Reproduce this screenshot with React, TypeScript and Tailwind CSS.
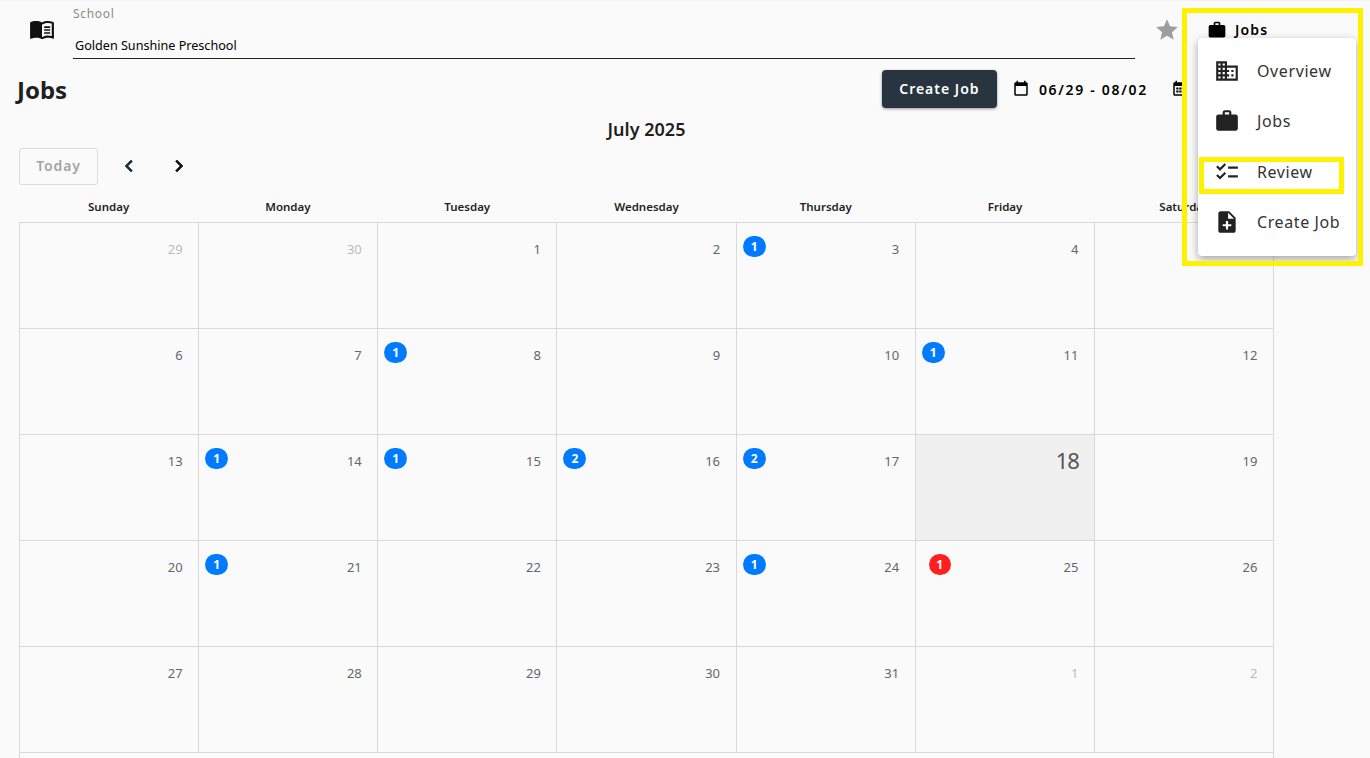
import type { ReactNode } from "react"

const sans = "font-['Noto_Sans',sans-serif]"

const icons = {
  book: "M21 5c-1.11-.35-2.33-.5-3.5-.5-1.95 0-4.05.4-5.5 1.5-1.45-1.1-3.55-1.5-5.5-1.5S2.45 4.9 1 6v14.65c0 .25.25.5.5.5.1 0 .15-.05.25-.05C3.1 20.45 5.05 20 6.5 20c1.95 0 4.05.4 5.5 1.5 1.35-.85 3.8-1.5 5.5-1.5 1.65 0 3.35.3 4.75 1.05.1.05.15.05.25.05.25 0 .5-.25.5-.5V6c-.6-.45-1.25-.75-2-1zm0 13.5c-1.1-.35-2.3-.5-3.5-.5-1.7 0-4.15.65-5.5 1.5V8c1.35-.85 3.8-1.5 5.5-1.5 1.2 0 2.4.15 3.5.5v11.5zM14 9.5h5.5V11H14zM14 12.2h5.5v1.5H14zM14 14.9h5.5v1.5H14z",
  star: "M12 17.27L18.18 21l-1.64-7.03L22 9.24l-7.19-.61L12 2 9.19 8.63 2 9.24l5.46 4.73L5.82 21z",
  work: "M20 6h-4V4c0-1.11-.89-2-2-2h-4c-1.11 0-2 .89-2 2v2H4c-1.11 0-1.99.89-1.99 2L2 19c0 1.11.89 2 2 2h16c1.11 0 2-.89 2-2V8c0-1.11-.89-2-2-2zm-6 0h-4V4h4v2z",
  domain: "M12 7V3H2v18h20V7H12zM6 19H4v-2h2v2zm0-4H4v-2h2v2zm0-4H4V9h2v2zm0-4H4V5h2v2zm4 12H8v-2h2v2zm0-4H8v-2h2v2zm0-4H8V9h2v2zm0-4H8V5h2v2zm10 12h-8v-2h2v-2h-2v-2h2v-2h-2V9h8v10zm-2-8h-2v2h2v-2zm0 4h-2v2h2v-2z",
  checklist: "M22 7h-9v2h9V7zm0 8h-9v2h9v-2zM5.54 11 2 7.46l1.41-1.41 2.12 2.12 4.24-4.24 1.41 1.41L5.54 11zm0 8L2 15.46l1.41-1.41 2.12 2.12 4.24-4.24 1.41 1.41L5.54 19z",
  noteAdd: "M14 2H6c-1.1 0-1.99.9-1.99 2L4 20c0 1.1.89 2 1.99 2H18c1.1 0 2-.9 2-2V8l-6-6zm2 14h-3v3h-2v-3H8v-2h3v-3h2v3h3v2zm-3-7V3.5L18.5 9H13z",
  event: "M19 3h-1V1h-2v2H8V1H6v2H5c-1.11 0-1.99.9-1.99 2L3 19c0 1.1.89 2 2 2h14c1.1 0 2-.9 2-2V5c0-1.1-.9-2-2-2zm0 16H5V8h14v11z",
  eventGrid: "M19 3h-1V1h-2v2H8V1H6v2H5c-1.11 0-1.99.9-1.99 2L3 19c0 1.1.89 2 2 2h14c1.1 0 2-.9 2-2V5c0-1.1-.9-2-2-2zm0 16H5V8h14v11zM7 10h3v2.5H7zM11 10h3v2.5h-3zM15 10h2v2.5h-2zM7 14h3v2.5H7zM11 14h3v2.5h-3z",
  left: "M15.41 7.41L14 6l-6 6 6 6 1.41-1.41L10.83 12z",
  right: "M10 6L8.59 7.41 13.17 12l-4.58 4.59L10 18l6-6z",
}

function Icon({ d, className }: { d: string; className: string }) {
  return (
    <svg viewBox="0 0 24 24" className={className} fill="currentColor" aria-hidden="true">
      <path d={d} />
    </svg>
  )
}

type Day = { n: number; muted?: boolean; today?: boolean; badge?: number; red?: boolean }

const weeks: Day[][] = [
  [{ n: 29, muted: true }, { n: 30, muted: true }, { n: 1 }, { n: 2 }, { n: 3, badge: 1 }, { n: 4 }, { n: 5 }],
  [{ n: 6 }, { n: 7 }, { n: 8, badge: 1 }, { n: 9 }, { n: 10 }, { n: 11, badge: 1 }, { n: 12 }],
  [{ n: 13 }, { n: 14, badge: 1 }, { n: 15, badge: 1 }, { n: 16, badge: 2 }, { n: 17, badge: 2 }, { n: 18, today: true }, { n: 19 }],
  [{ n: 20 }, { n: 21, badge: 1 }, { n: 22 }, { n: 23 }, { n: 24, badge: 1 }, { n: 25, badge: 1, red: true }, { n: 26 }],
  [{ n: 27 }, { n: 28 }, { n: 29 }, { n: 30 }, { n: 31 }, { n: 1, muted: true }, { n: 2, muted: true }],
]

const dayNames = ["Sunday", "Monday", "Tuesday", "Wednesday", "Thursday", "Friday", "Saturday"]

function DayCell({ day }: { day: Day }) {
  return (
    <div className={`relative h-[106px] border-r border-b border-[#d9d9d9] ${day.today ? "bg-[#f0f0f0]" : ""}`}>
      {day.badge && (
        <span
          className={`absolute top-[13px] flex h-[21px] items-center justify-center rounded-full text-[12px] font-bold text-white ${
            day.red ? "left-[13px] w-[22px] bg-[#ff1f1f]" : "left-[6px] w-[23px] bg-[#007bff]"
          }`}
        >
          {day.badge}
        </span>
      )}
      <div
        className={`text-right ${
          day.today
            ? "pt-[9px] pr-[15px] text-[22px] leading-[32px] tracking-[-1px] text-[#555]"
            : "pt-[16px] pr-[15.5px] text-[13px] leading-[20px]"
        } ${day.muted ? "text-[#bbb]" : day.today ? "" : "text-[#666]"}`}
      >
        {day.n}
      </div>
    </div>
  )
}

function MenuItem({ d, label, size = "h-[26px] w-[26px]" }: { d: string; label: ReactNode; size?: string }) {
  return (
    <div className="flex h-[50.5px] items-center pl-[16px] text-[16px] tracking-[0.6px] text-[#333]">
      <div className="flex w-[43px] items-center">
        <Icon d={d} className={`${size} text-[#222]`} />
      </div>
      {label}
    </div>
  )
}

export default function App() {
  return (
    <div className={`relative h-[758px] w-[1370px] overflow-hidden bg-[#fafafa] ${sans} text-[#1f1f1f]`}>
      <header className="flex h-[70px] items-start border-t border-[#f2f2f2]">
        <div className="flex w-[73px] justify-center pt-[15px] pl-[11px]">
          <Icon d={icons.book} className="h-[26px] w-[26px] text-[#111]" />
        </div>
        <div className="w-[1062px] pt-[5px]">
          <div className="text-[12px] leading-[16px] tracking-[0.7px] text-[#8a8a8a]">School</div>
          <div className="mt-[13px] h-[24px] border-b border-[#222] pt-[1px] pl-[2px] text-[12.6px] leading-[20px] text-black">
            Golden Sunshine Preschool
          </div>
        </div>
        <Icon d={icons.star} className="mt-[16px] ml-[19px] h-[26px] w-[26px] text-[#9e9e9e]" />
        <div className="mt-[18px] ml-[27px] flex items-center gap-[8px] text-[14px] font-semibold tracking-[1.2px] text-black">
          <Icon d={icons.work} className="h-[20px] w-[20px]" />
          Jobs
        </div>
      </header>

      <div className="flex h-[38px] items-center pr-[181px] pl-[17px]">
        <h1 className="pt-[2px] text-[24px] font-bold">Jobs</h1>
        <button className="ml-auto h-[38px] w-[115px] rounded-[4px] bg-[#28343f] pb-[2px] text-[14px] font-semibold tracking-[1px] text-white shadow-[0_1px_3px_rgba(0,0,0,0.4)]">
          Create Job
        </button>
        <div className="ml-[15px] flex items-center gap-[9px] text-[14px] font-semibold tracking-[1.7px] text-black">
          <Icon d={icons.event} className="h-[18px] w-[18px]" />
          06/29 - 08/02
        </div>
        <Icon d={icons.eventGrid} className="ml-[23px] h-[18px] w-[18px] text-black" />
      </div>

      <div className="ml-[19px] w-[1255px]">
        <h2 className="mt-[6px] h-[30px] text-center text-[18px] leading-[30px] font-semibold text-[#1f1f1f]">July 2025</h2>
        <div className="mt-[4px] flex h-[37px] items-center">
          <button className="h-[37px] w-[79px] rounded-[3px] border border-[#dcdcdc] pb-[2px] text-[14px] font-semibold tracking-[0.9px] text-[#a5a5a5]">
            Today
          </button>
          <svg viewBox="0 0 24 24" className="mb-[2px] ml-[19px] h-[24px] w-[24px] text-[#1c2b3a]" fill="currentColor" stroke="currentColor" strokeWidth="0.7" aria-hidden="true">
            <path d={icons.left} />
          </svg>
          <svg viewBox="0 0 24 24" className="mb-[2px] ml-[26px] h-[24px] w-[24px] text-[#111]" fill="currentColor" stroke="currentColor" strokeWidth="0.7" aria-hidden="true">
            <path d={icons.right} />
          </svg>
        </div>
        <div className="grid h-[37px] grid-cols-7 items-center pt-[7px]">
          {dayNames.map((name) => (
            <div key={name} className="text-center text-[11.5px] font-semibold text-[#1f1f1f]">
              {name}
            </div>
          ))}
        </div>
        <div className="grid grid-cols-7 border-t border-l border-[#d9d9d9]">
          {weeks.flat().map((day, i) => (
            <DayCell key={i} day={day} />
          ))}
        </div>
        <div className="h-[10px] border-x border-[#d9d9d9]" />
      </div>

      <div className="absolute top-[38px] left-[1198px] w-[158px] rounded-[4px] bg-white pt-[7.5px] pb-[8.5px] shadow-[0_3px_8px_rgba(0,0,0,0.35)]">
        <MenuItem d={icons.domain} label="Overview" />
        <MenuItem d={icons.work} label="Jobs" />
        <MenuItem d={icons.checklist} label="Review" />
        <MenuItem d={icons.noteAdd} label="Create Job" />
      </div>

      <div className="pointer-events-none absolute top-[8px] left-[1182px] h-[258px] w-[181px] border-[5px] border-[#fff200]" />
      <div className="pointer-events-none absolute top-[157px] left-[1199px] h-[37px] w-[145px] border-[5px] border-[#fff200]" />
    </div>
  )
}
